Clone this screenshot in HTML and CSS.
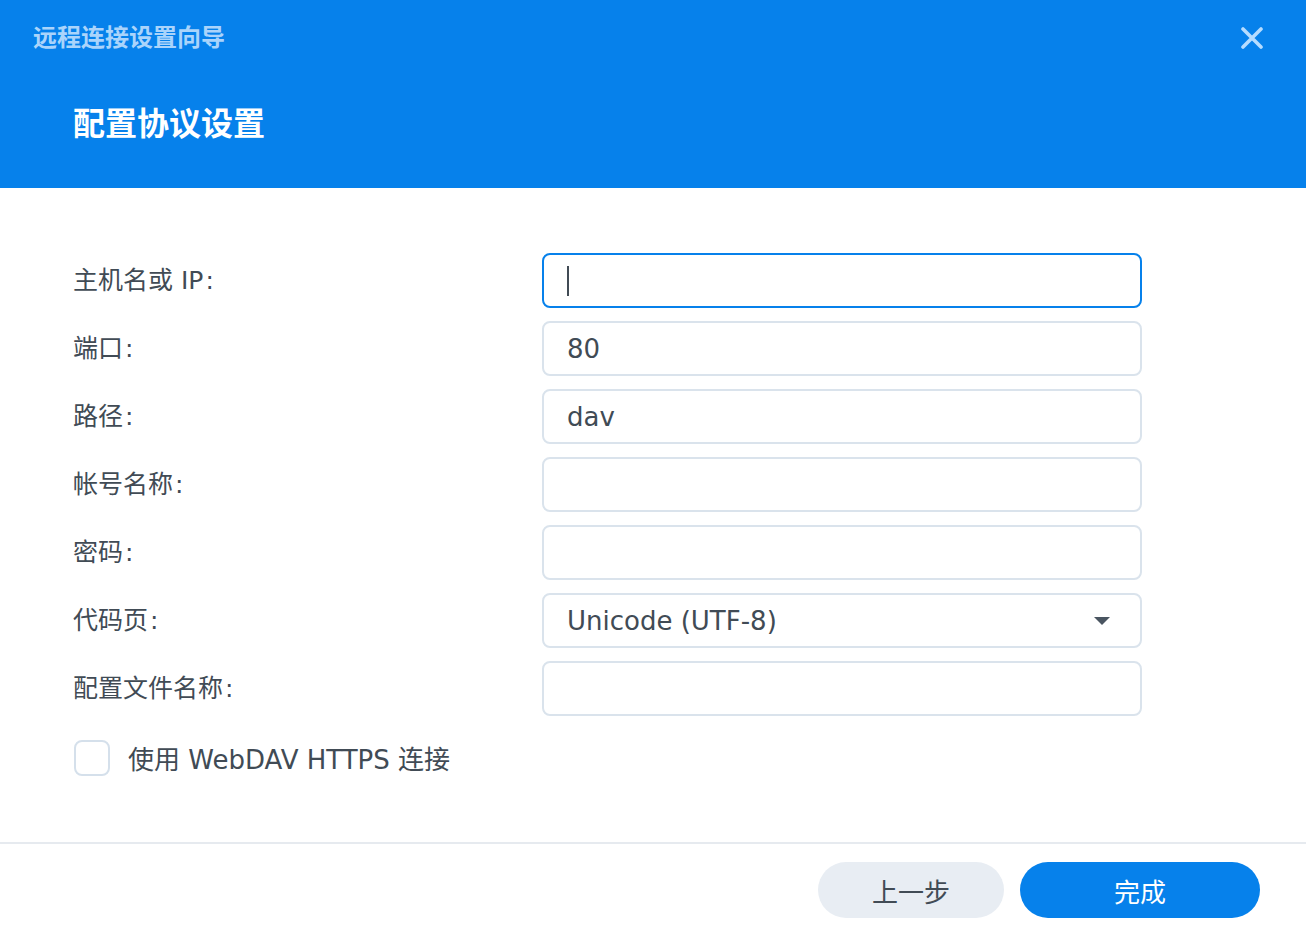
FILE: index.html
```html
<!DOCTYPE html>
<html lang="zh-CN">
<head>
    <meta charset="UTF-8">
    <meta name="viewport" content="width=device-width, initial-scale=1.0">
    <title>远程连接设置向导</title>
    <link rel="stylesheet" href="styles.css">
</head>
<body>
    <div class="header">
        <div class="topbar">
            <div class="wizard-title">远程连接设置向导</div>
            <div class="close">
                <svg width="22" height="22" viewBox="0 0 22 22">
                    <path d="M2 2 L20 20 M20 2 L2 20" stroke="#b5dcff" stroke-width="3.6" stroke-linecap="round"/>
                </svg>
            </div>
        </div>
        <div class="step-title">配置协议设置</div>
    </div>

    <div class="content">
        <div class="form">
            <div class="label">主机名或 IP<span class="colon">:</span></div>
            <div class="field focused"><span class="caret"></span></div>

            <div class="label">端口<span class="colon">:</span></div>
            <div class="field">80</div>

            <div class="label">路径<span class="colon">:</span></div>
            <div class="field">dav</div>

            <div class="label">帐号名称<span class="colon">:</span></div>
            <div class="field"></div>

            <div class="label">密码<span class="colon">:</span></div>
            <div class="field"></div>

            <div class="label">代码页<span class="colon">:</span></div>
            <div class="field select">
                <span>Unicode (UTF-8)</span>
                <span class="arrow"></span>
            </div>

            <div class="label">配置文件名称<span class="colon">:</span></div>
            <div class="field"></div>
        </div>

        <div class="check-row">
            <span class="checkbox"></span>
            <span class="check-text">使用 WebDAV HTTPS 连接</span>
        </div>
    </div>

    <div class="footer">
        <div class="btn btn-back">上一步</div>
        <div class="btn btn-done">完成</div>
    </div>
</body>
</html>
```

FILE: styles.css
```css
body {
    margin: 0;
    font-family: "DejaVu Sans", "Noto Sans CJK SC", sans-serif;
    color: #414b55;
    background: #fff;
}
.header {
    height: 188px;
    background: #0681eb;
    box-sizing: border-box;
}
.topbar {
    display: flex;
    justify-content: space-between;
    align-items: center;
    padding: 21px 43px 0 33px;
    height: 34px;
}
.wizard-title {
    font-size: 24px;
    font-weight: 700;
    color: #aad4fb;
    line-height: 34px;
}
.close {
    display: flex;
    align-items: center;
}
.step-title {
    margin: 49px 0 0 73px;
    font-size: 32px;
    font-weight: 700;
    color: #fff;
    line-height: 40px;
}

.content {
    padding: 65px 0 0 73px;
    height: 656px;
    box-sizing: border-box;
    border-bottom: 2px solid #e6eaef;
}
.form {
    display: grid;
    grid-template-columns: 469px 600px;
    grid-auto-rows: 55px;
    row-gap: 13px;
    align-items: center;
}
.label {
    font-size: 25px;
    line-height: 32px;
    padding-top: 1px;
}
.colon {
    margin-left: 2px;
}
.field {
    height: 55px;
    box-sizing: border-box;
    border: 2px solid #dae3ec;
    border-radius: 8px;
    padding: 0 23px;
    display: flex;
    align-items: center;
    font-size: 26px;
}
.field.focused {
    border-color: #0681eb;
}
.caret {
    width: 2px;
    height: 30px;
    background: #414b55;
}
.select {
    justify-content: space-between;
}
.arrow {
    width: 0;
    height: 0;
    border-left: 8px solid transparent;
    border-right: 8px solid transparent;
    border-top: 8px solid #4a5561;
    margin-right: 7px;
}

.check-row {
    display: flex;
    align-items: center;
    margin-top: 23px;
}
.checkbox {
    width: 36px;
    height: 36px;
    box-sizing: border-box;
    border: 2px solid #d5e0eb;
    border-radius: 8px;
    margin-left: 1px;
}
.check-text {
    margin-left: 18px;
    font-size: 26px;
}

.footer {
    display: flex;
    justify-content: flex-end;
    gap: 16px;
    padding: 18px 46px 0 0;
}
.btn {
    height: 56px;
    border-radius: 28px;
    display: flex;
    align-items: center;
    justify-content: center;
    font-size: 26px;
}
.btn-back {
    width: 186px;
    background: #e8edf3;
    color: #414b55;
}
.btn-done {
    width: 240px;
    background: #0681eb;
    color: #fff;
}
```
